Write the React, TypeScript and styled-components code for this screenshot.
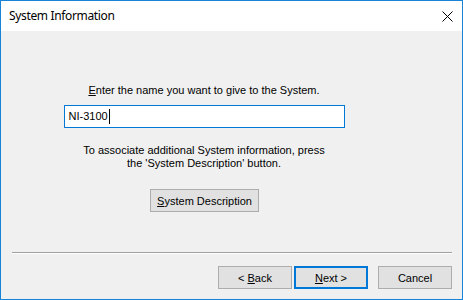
import React from "react";
import styled, { createGlobalStyle } from "styled-components";

const Global = createGlobalStyle`
  html, body { margin: 0; padding: 0; background: #ffffff; }
  * { box-sizing: border-box; }
`;

const Window = styled.div`
  width: 463px;
  height: 300px;
  border: 1px solid #1883d7;
  display: flex;
  flex-direction: column;
  background: #f0f0f0;
  overflow: hidden;
`;

const TitleBar = styled.div`
  height: 30px;
  background: #ffffff;
  display: flex;
  align-items: center;
  justify-content: space-between;
  padding: 0 9px 0 8px;
  flex: none;
`;

const Title = styled.span`
  font-family: "Noto Sans", "Liberation Sans", sans-serif;
  font-size: 12px;
  letter-spacing: -0.35px;
  color: #000000;
  margin-top: -1px;
`;

const CloseButton = styled.div`
  width: 12px;
  height: 12px;
  display: flex;
  align-items: center;
  justify-content: center;
`;

const Body = styled.div`
  flex: 1;
  display: flex;
  flex-direction: column;
  font-family: "Liberation Sans", Arial, sans-serif;
  font-size: 11px;
  line-height: 13px;
  color: #000000;
`;

const Content = styled.div`
  width: 280px;
  margin-left: 63px;
  padding-top: 53px;
  display: flex;
  flex-direction: column;
  align-items: center;
`;

const Label = styled.div`
  text-align: center;
`;

const Field = styled.div`
  margin-top: 8px;
  width: 281px;
  height: 23px;
  border: 1px solid #0078d7;
  background: #ffffff;
  display: flex;
  align-items: center;
  padding-left: 4px;
`;

const Caret = styled.span`
  display: inline-block;
  width: 1px;
  height: 15px;
  background: #000000;
  margin-left: 1px;
`;

const Note = styled.div`
  margin-top: 16px;
  text-align: center;
`;

const Button = styled.button<{ $default?: boolean; $width: number }>`
  width: ${(p) => p.$width}px;
  height: 23px;
  background: #e1e1e1;
  border: ${(p) => (p.$default ? "2px solid #0078d7" : "1px solid #adadad")};
  font-family: "Liberation Sans", Arial, sans-serif;
  font-size: 11px;
  color: #000000;
  padding: 0;
  display: flex;
  align-items: center;
  justify-content: center;
`;

const DescButton = styled(Button)`
  margin-top: 19px;
  margin-left: 1px;
`;

const U = styled.span`
  text-decoration: underline;
  text-underline-offset: 1px;
`;

const Separator = styled.div`
  margin: auto 10px 0 11px;
  height: 2px;
  border-top: 1px solid #a0a0a0;
  border-bottom: 1px solid #ffffff;
`;

const Footer = styled.div`
  display: flex;
  justify-content: flex-end;
  align-items: center;
  padding: 12px 10px 10px 0;
`;

const NavGroup = styled.div`
  display: flex;
  gap: 2px;
  margin-right: 10px;
`;

export default function App() {
  return (
    <>
      <Global />
      <Window>
        <TitleBar>
          <Title>System Information</Title>
          <CloseButton>
            <svg width="11" height="11" viewBox="0 0 11 11">
              <path d="M0.5 0.5 L10.5 10.5 M10.5 0.5 L0.5 10.5" stroke="#000" strokeWidth="1" fill="none" />
            </svg>
          </CloseButton>
        </TitleBar>
        <Body>
          <Content>
            <Label>
              <U>E</U>nter the name you want to give to the System.
            </Label>
            <Field>
              NI-3100
              <Caret />
            </Field>
            <Note>
              To associate additional System information, press
              <br />
              the 'System Description' button.
            </Note>
            <DescButton $width={109}>
              <U>S</U>ystem Description
            </DescButton>
          </Content>
          <Separator />
          <Footer>
            <NavGroup>
              <Button $width={74}>
                &lt;&nbsp;<U>B</U>ack
              </Button>
              <Button $width={74} $default>
                <U>N</U>ext &gt;
              </Button>
            </NavGroup>
            <Button $width={74}>Cancel</Button>
          </Footer>
        </Body>
      </Window>
    </>
  );
}
